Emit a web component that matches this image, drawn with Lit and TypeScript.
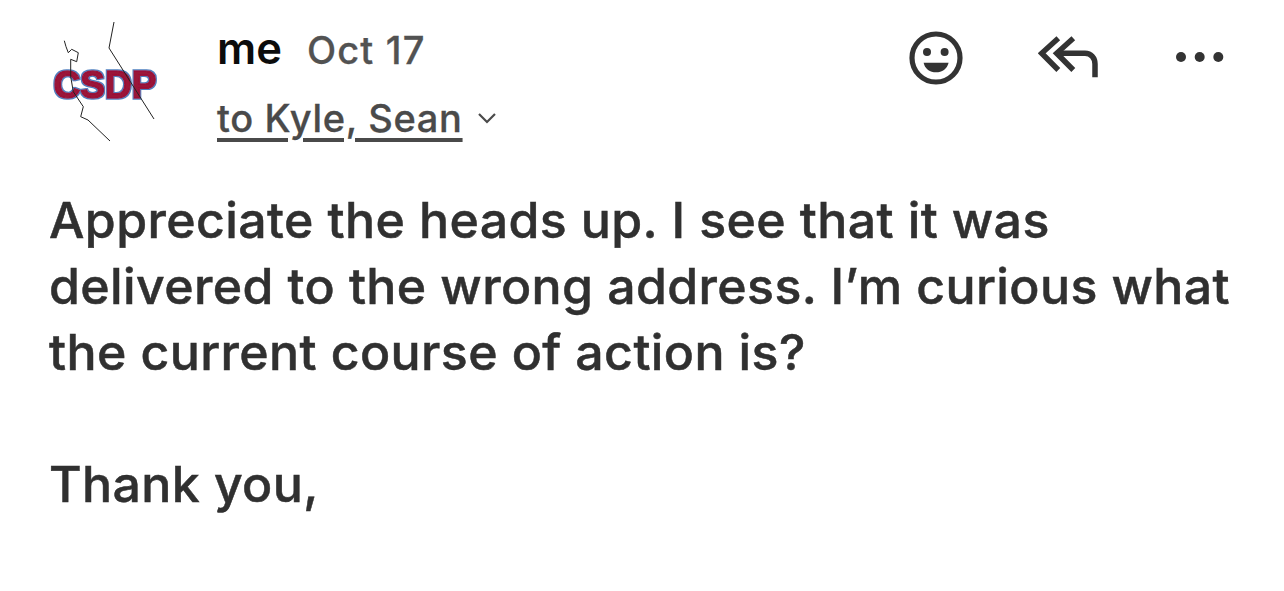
import { LitElement, html, css } from "lit";
import { customElement } from "lit/decorators.js";

@customElement("app-root")
export class AppRoot extends LitElement {
  static styles = css`
    :host { display: block; width: 1284px; height: 591px; background: #fff; overflow: hidden; font-family: Inter, "Noto Sans", sans-serif; color: #303030; }
    .page { padding: 20px 50px 0 49px; display: flex; flex-direction: column; gap: 45px; }
    .head { display: flex; height: 122px; padding-right: 9px; }
    .logo { width: 110px; height: 122px; flex: none; display: block; margin-left: 1px; }
    .who { margin-left: 57px; flex: 1; display: flex; flex-direction: column; padding-top: 2px; }
    .l1 { display: flex; align-items: baseline; gap: 25px; height: 47px; }
    .me { font-size: 43.5px; font-weight: 600; color: #0c0c0c; }
    .date { font-size: 38px; font-weight: 500; color: #525252; letter-spacing: 1.2px; -webkit-text-stroke: 0.3px #525252; }
    .l2 { display: flex; align-items: center; gap: 14px; margin-top: 26px; }
    .to { font-size: 38px; font-weight: 500; color: #4a4a4a; letter-spacing: 0.65px; -webkit-text-stroke: 0.3px #4a4a4a; text-decoration: underline; text-decoration-thickness: 3.5px; text-underline-offset: 6px; }
    .actions { display: flex; align-items: flex-start; padding-top: 10px; }
    .actions svg { display: block; }
    .smile { margin-right: 74px; }
    .reply { margin-right: 75px; margin-top: 5px; }
    .more { margin-top: 21px; }
    .body { font-size: 50px; font-weight: 500; line-height: 66px; color: #303030; letter-spacing: 0.4px; -webkit-text-stroke: 0.5px #303030; white-space: nowrap; }
    .body p { margin: 0; }
    .gap { height: 66px; }
    .mark { font-family: "Liberation Sans", sans-serif; font-weight: 700; font-size: 38px; fill: #9a1238; stroke: #9a1238; stroke-width: 1.5; }
    .map { fill: none; stroke: #222; stroke-width: 1; }
  `;

  render() {
    return html`<div class="page">
      <div class="head">
        <svg class="logo" viewBox="0 0 110 122" aria-label="CSDP logo">
          <defs>
            <filter id="edge" x="-5%" y="-10%" width="110%" height="120%">
              <feMorphology in="SourceAlpha" operator="dilate" radius="1.3" result="wide"/>
              <feFlood flood-color="#4f7fbf"/>
              <feComposite in2="wide" operator="in" result="blue"/>
              <feMerge><feMergeNode in="blue"/><feMergeNode in="SourceGraphic"/></feMerge>
            </filter>
          </defs>
          <text class="mark" x="3.5" y="78" textLength="103" lengthAdjust="spacingAndGlyphs" filter="url(#edge)">CSDP</text>
          <path class="map" d="M64 2 L59 28 L104 99"/>
          <path class="map" d="M14.3 20.7 L16 26.7 L18.3 32.7 L21.7 29.3 L28.3 32.7 L26.7 41.7 L20.7 39.3 L20.7 56.7 L23.3 71.7 L33.3 86.7 L30.7 96.7 L38 100 L60 121"/>
        </svg>
        <div class="who">
          <div class="l1"><span class="me">me</span><span class="date">Oct 17</span></div>
          <div class="l2"><span class="to">to Kyle, Sean</span>
            <svg width="20" height="12" viewBox="0 0 20 12"><path d="M2 2 L10 10 L18 2" fill="none" stroke="#4a4a4a" stroke-width="2.2"/></svg>
          </div>
        </div>
        <div class="actions">
          <svg class="smile" width="56" height="56" viewBox="0 0 56 56">
            <circle cx="28" cy="28" r="24" fill="none" stroke="#333" stroke-width="5.2"/>
            <circle cx="19" cy="22" r="4" fill="#333"/><circle cx="36.6" cy="22" r="4" fill="#333"/>
            <path d="M15.6 32.7 H40.6 C39 39 34 42.3 28 42.3 C22 42.3 17 39 15.6 32.7 Z" fill="#333"/>
          </svg>
          <svg class="reply" width="62" height="46" viewBox="0 0 62 46">
            <g fill="none" stroke="#333" stroke-width="5.5">
              <path d="M20.3 3.3 L3.7 18.3 L20.3 35"/>
              <path d="M35.3 3.3 L18.7 18.3 L35.3 35"/>
              <path d="M19 18.3 H47 C53 18.3 57 23 57 29 V42.3"/>
            </g>
          </svg>
          <svg class="more" width="50" height="12" viewBox="0 0 50 12" fill="#333">
            <circle cx="6" cy="6" r="5"/><circle cx="24.7" cy="6" r="5"/><circle cx="43.3" cy="6" r="5"/>
          </svg>
        </div>
      </div>
      <div class="body">
        <p>Appreciate the heads up. I see that it was</p>
        <p>delivered to the wrong address. I’m curious what</p>
        <p>the current course of action is?</p>
        <div class="gap"></div>
        <p>Thank you,</p>
      </div>
    </div>`;
  }
}
